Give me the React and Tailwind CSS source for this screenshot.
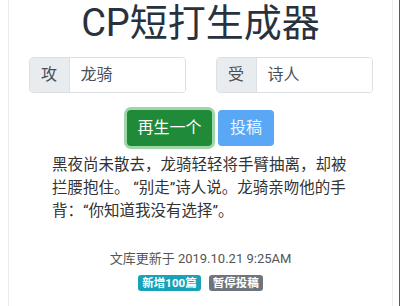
const font = "font-['Roboto','Noto_Sans_CJK_SC',sans-serif]";

function InputGroup({ label, value }) {
  return (
    <div className="flex h-[36px] w-[157px] rounded-[4px] border border-[#dcdfe3] overflow-hidden">
      <div className="w-[40px] shrink-0 flex items-center justify-center bg-[#e9ecef] border-r border-[#dcdfe3] text-[16px] text-[#495057]">
        {label}
      </div>
      <input
        readOnly
        value={value}
        className="min-w-0 flex-1 bg-white pl-[11px] text-[16px] text-[#495057] outline-none"
      />
    </div>
  );
}

export default function App() {
  return (
    <div className={`w-[400px] h-[306px] bg-white overflow-hidden flex border-r border-[#5a5a5a] ${font}`}>
      <div className="ml-2 w-[385px] h-full border-x border-[#ebebeb] flex flex-col items-center">
        <h1 className="mt-[1px] text-[38px] leading-[44px] font-normal text-[#28323e]">
          CP短打生成器
        </h1>

        <div className="mt-[12px] flex gap-[30px]">
          <InputGroup label="攻" value="龙骑" />
          <InputGroup label="受" value="诗人" />
        </div>

        <div className="mt-[17px] flex gap-[6px]">
          <button className="h-[36px] w-[85px] rounded-[4px] bg-[#1f8a38] text-[16px] text-white ring-[3px] ring-[#9ed6a8]">
            再生一个
          </button>
          <button className="h-[36px] w-[56px] rounded-[4px] bg-[#5aa7f6] text-[16px] text-[#eef6ff]">
            投稿
          </button>
        </div>

        <p className="mt-[8px] w-[297px] text-[15.5px] leading-[23px] text-[#333] whitespace-nowrap">
          黑夜尚未散去，龙骑轻轻将手臂抽离，却被
          <br />
          拦腰抱住。 “别走”诗人说。龙骑亲吻他的手
          <br />
          背：“你知道我没有选择”。
        </p>

        <div className="mt-[26px] text-[13px] leading-[20px] text-[#555]">
          文库更新于 2019.10.21 9:25AM
        </div>

        <div className="mt-[6px] flex gap-[8px]">
          <span className="h-[16px] px-[4px] rounded-[3px] bg-[#17a2b8] text-white text-[11.5px] font-bold leading-[16px]">
            新增100篇
          </span>
          <span className="h-[16px] px-[4px] rounded-[3px] bg-[#6c757d] text-white text-[11.5px] font-bold leading-[16px]">
            暂停投稿
          </span>
        </div>
      </div>
    </div>
  );
}
